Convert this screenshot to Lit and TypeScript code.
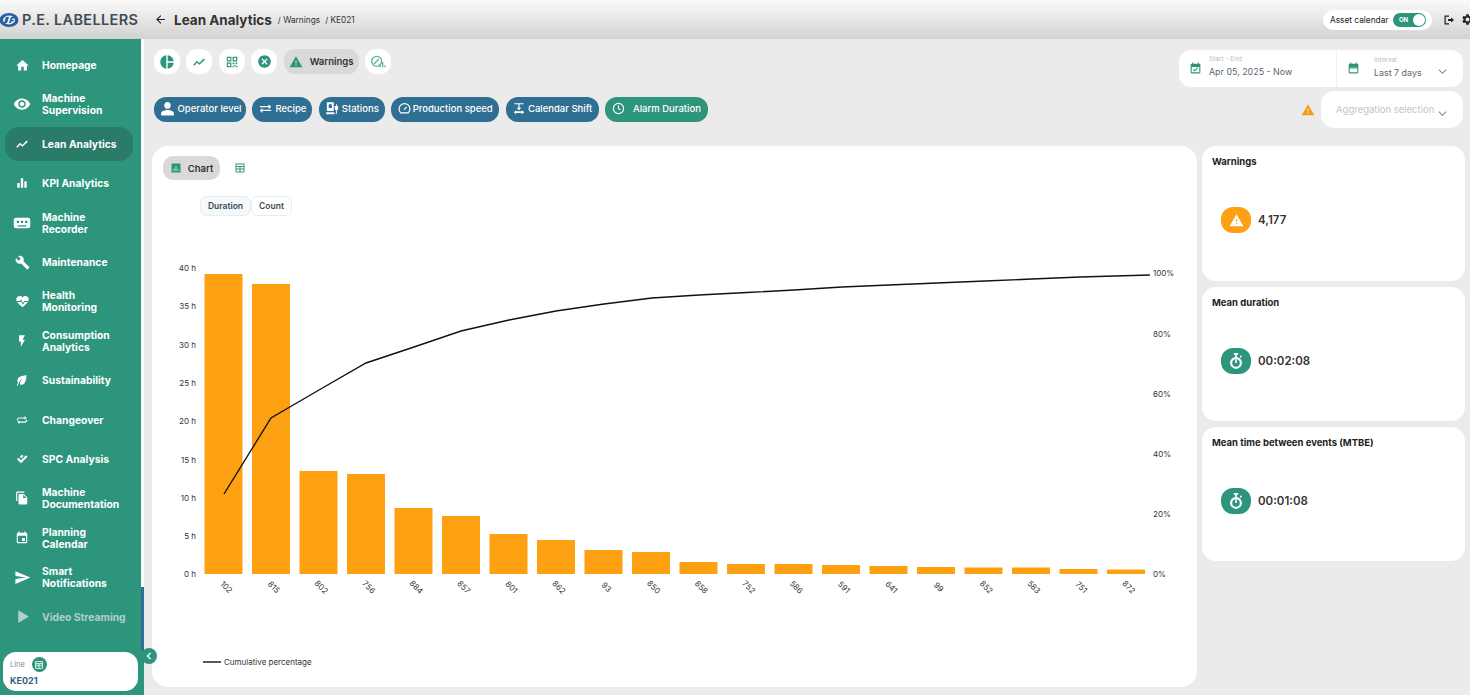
import { LitElement, html, css, svg } from "lit";
import { customElement } from "lit/decorators.js";

const PATHS: Record<string, string> = {
  home: "M10 20v-6h4v6h5v-8h3L12 3 2 12h3v8z",
  eye: "M12 4.5C7 4.5 2.73 7.61 1 12c1.73 4.39 6 7.5 11 7.5s9.27-3.11 11-7.5c-1.73-4.39-6-7.5-11-7.5zM12 17c-2.76 0-5-2.24-5-5s2.24-5 5-5 5 2.24 5 5-2.24 5-5 5zm0-8c-1.66 0-3 1.34-3 3s1.34 3 3 3 3-1.34 3-3-1.34-3-3-3z",
  trend: "M2 17l6.5-7 4 3.5L20 6l2 2-9.3 8.8-4-3.5L4 18.5z",
  bars: "M10 20h4V4h-4v16zm-6 0h4v-8H4v8zM16 9v11h4V9h-4z",
  recorder: "M4 5h16a3 3 0 0 1 3 3v8a3 3 0 0 1-3 3H4a3 3 0 0 1-3-3V8a3 3 0 0 1 3-3zm1 4v3h3V9H5zm5.5 0v3h3V9h-3zM16 9v3h3V9h-3zM6 15v1.5h12V15H6z",
  wrench: "M22.7 19l-9.1-9.1c.9-2.3.4-5-1.5-6.9-2-2-5-2.4-7.4-1.3L9 6 6 9 1.6 4.7C.4 7.1.9 10.1 2.9 12.1c1.9 1.9 4.6 2.4 6.9 1.5l9.1 9.1c.4.4 1 .4 1.4 0l2.3-2.3c.5-.4.5-1.1.1-1.4z",
  heart: "M12 21.35l-1.45-1.32C5.4 15.36 2 12.28 2 8.5 2 5.42 4.42 3 7.5 3c1.74 0 3.41.81 4.5 2.09C13.09 3.81 14.76 3 16.5 3 19.58 3 22 5.42 22 8.5c0 3.78-3.4 6.86-8.55 11.54L12 21.35zM3 11.2h5l1.8-3 3 6 1.9-3H21v1.6h-5.5l-2.8 4.2-3-6-.8 1.8H3z",
  bolt: "M7 2v11h3v9l7-12h-4l4-8z",
  leaf: "M6.05 8.05c-2.73 2.73-2.73 7.15-.02 9.88 1.47-3.4 4.09-6.24 7.36-7.93-2.77 2.34-4.71 5.61-5.39 9.32 2.6 1.23 5.8.78 7.95-1.37C19.43 14.47 20 4 20 4S9.53 4.57 6.05 8.05zM3 21.5c.6-2 1.5-3.6 2.6-5l1.2 1c-1 1.3-1.8 2.8-2.3 4.5z",
  repeat: "M7 9.5h9.5V12L20 8.5 16.5 5v2.5H7C4.8 7.5 3 9.3 3 11.5v1h2v-1c0-1.1.9-2 2-2zM17 14.5H7.5V12L4 15.5 7.5 19v-2.5H17c2.2 0 4-1.8 4-4v-1h-2v1c0 1.1-.9 2-2 2z",
  checks: "M2 12.5l3-3 5 5 10-10 3 3-13 13zM7.5 8l4-4.5 3.5 2.5-4.5 4.5z",
  docs: "M16 1H4c-1.1 0-2 .9-2 2v14h2V3h12V1zm-1 4l6 6v10c0 1.1-.9 2-2 2H7.99C6.89 23 6 22.1 6 21l.01-14c0-1.1.89-2 1.99-2h7zm-1 7h5.5L14 6.5V12z",
  event: "M17 12h-5v5h5v-5zM16 1v2H8V1H6v2H5c-1.11 0-1.99.9-1.99 2L3 19c0 1.1.89 2 2 2h14c1.1 0 2-.9 2-2V5c0-1.1-.9-2-2-2h-1V1h-2zm3 18H5V8h14v11z",
  send: "M2.01 21L23 12 2.01 3 2 10l15 2-15 2z",
  play: "M6 3v18l15-9z",
  warning: "M1 21h22L12 2 1 21zm12-3h-2v-2h2v2zm0-4h-2v-4h2v4z",
  pie: "M11 2v20c-5.07-.5-9-4.79-9-10s3.93-9.5 9-10zm2.03 0v8.99H22c-.47-4.74-4.24-8.52-8.97-8.99zm0 11.01V22c4.74-.47 8.5-4.25 8.97-8.99h-8.97z",
  qr: "M3 3h8v8H3V3zm2 2v4h4V5H5zm8-2h8v8h-8V3zm2 2v4h4V5h-4zM3 13h8v8H3v-8zm2 2v4h4v-4H5zm8-2h3v3h-3v-3zm5 0h3v3h-3v-3zm-3 4h3v2h-3v-2zm-2 2h2v2h-2v-2zm5 0h3v2h-3v-2z",
  cancel: "M12 2C6.47 2 2 6.47 2 12s4.47 10 10 10 10-4.47 10-10S17.53 2 12 2zm5 13.59L15.59 17 12 13.41 8.41 17 7 15.59 10.59 12 7 8.41 8.41 7 12 10.59 15.59 7 17 8.41 13.41 12 17 15.59z",
  person: "M12 12.5c2.6 0 4.6-2.1 4.6-4.8S14.6 2.8 12 2.8 7.4 5 7.4 7.7s2 4.8 4.6 4.8zm0 1.6c-3.4 0-9 1.6-9 4.5V22h18v-3.4c0-2.9-5.6-4.5-9-4.5z",
  swap: "M6.99 11L3 15l3.99 4v-3H21v-2H6.99v-3zM21 9l-3.99-4v3H3v2h14.01v3L21 9z",
  stations: "M3 2h11v14H3V2zm3 3v6h5V5H6zm-4 13h13v3H2v-3zM18 5h1v3h2v4c0 1.5-1 2.5-2 2.7V19c0 1.5-1 2-2 2v-1.5c.4 0 .5-.2.5-.5v-4.3c-1-.2-2-1.2-2-2.7V8h2V5z",
  shift: "M4 2h16v2h-7v6h3l-4 4-4-4h3V4H4V2zm3 12v2h10v-2l4 3.5-4 3.5v-2H7v2l-4-3.5L7 14z",
  gear: "M19.14 12.94c.04-.3.06-.61.06-.94 0-.32-.02-.64-.07-.94l2.03-1.58c.18-.14.23-.41.12-.61l-1.92-3.32c-.12-.22-.37-.29-.59-.22l-2.39.96c-.5-.38-1.03-.7-1.62-.94l-.36-2.54c-.04-.24-.24-.41-.48-.41h-3.84c-.24 0-.43.17-.47.41l-.36 2.54c-.59.24-1.13.57-1.62.94l-2.39-.96c-.22-.08-.47 0-.59.22L2.74 8.87c-.12.21-.08.47.12.61l2.03 1.58c-.05.3-.09.63-.09.94s.02.64.07.94l-2.03 1.58c-.18.14-.23.41-.12.61l1.92 3.32c.12.22.37.29.59.22l2.39-.96c.5.38 1.03.7 1.62.94l.36 2.54c.05.24.24.41.48.41h3.84c.24 0 .44-.17.47-.41l.36-2.54c.59-.24 1.13-.56 1.62-.94l2.39.96c.22.08.47 0 .59-.22l1.92-3.32c.12-.22.07-.47-.12-.61l-2.01-1.58zM12 15.6c-1.98 0-3.6-1.62-3.6-3.6s1.62-3.6 3.6-3.6 3.6 1.62 3.6 3.6-1.62 3.6-3.6 3.6z",
  back: "M20 11H7.83l5.59-5.59L12 4l-8 8 8 8 1.41-1.41L7.83 13H20z",
  logout: "M3 3h9v2.5H5.5v13H12V21H3V3zm13 4l6 5-6 5v-3.2h-6v-3.6h6V7z",
  chartbox: "M3 3h18v18H3V3zm4 10v5h2v-5H7zm4-5v10h2V8h-2zm4 7v3h2v-3h-2z",
  table: "M3 3h18v18H3V3zm2 2v3h14V5H5zm0 5v3h6v-3H5zm8 0v3h6v-3h-6zm-8 5v4h6v-4H5zm8 0v4h6v-4h-6z",
  calcheck: "M16 1v2H8V1H6v2H5a2 2 0 0 0-2 2v14a2 2 0 0 0 2 2h14a2 2 0 0 0 2-2V5a2 2 0 0 0-2-2h-1V1h-2zM5 9h14v10H5V9zm5.5 8.5L7.3 14.3l1.4-1.4 1.8 1.8 4.8-4.8 1.4 1.4-6.2 6.2z",
  calendar: "M16 1v2H8V1H6v2H5a2 2 0 0 0-2 2v14a2 2 0 0 0 2 2h14a2 2 0 0 0 2-2V5a2 2 0 0 0-2-2h-1V1h-2zM5 10h14v9H5v-9zm0 2h14v-1.5H5V12z",
};

const icon = (name: string, size: number, color = "currentColor") => html`
  <svg width=${size} height=${size} viewBox="0 0 24 24" fill=${color} style="flex:none">
    <path fill-rule="evenodd" d=${PATHS[name]}></path>
  </svg>
`;

const chevron = (size: number, color = "#7c8790") => html`
  <svg width=${size} height=${size} viewBox="0 0 12 12" fill="none" stroke=${color} stroke-width="1.1" style="flex:none">
    <polyline points="2,4 6,8 10,4"></polyline>
  </svg>
`;

const gauge = (size: number) => html`
  <svg width=${size} height=${size} viewBox="0 0 24 24" fill="none" stroke="#fff" stroke-width="2.2" style="flex:none">
    <path d="M5 20a10 10 0 1 1 14 0z"></path>
    <path d="M11 14l5-5"></path>
  </svg>
`;

const clock = (size: number) => html`
  <svg width=${size} height=${size} viewBox="0 0 24 24" fill="none" stroke="#fff" stroke-width="2" style="flex:none">
    <circle cx="12" cy="12" r="9.5"></circle>
    <path d="M12 6v6.5l4 2"></path>
  </svg>
`;

const stopwatch = (size: number) => html`
  <svg width=${size} height=${size} viewBox="0 0 24 24" fill="none" stroke="#fff" stroke-width="3" style="flex:none">
    <circle cx="12" cy="14.5" r="6.5"></circle>
    <path d="M9 2.5h6" stroke-width="2.4"></path>
    <path d="M12 3v4M12 14.5V10" stroke-width="2.2"></path>
    <path d="M17.5 7l1.8-1.8" stroke-width="2"></path>
  </svg>
`;

const NAV = [
  { icon: "home", size: 15, label: ["Homepage"] },
  { icon: "eye", size: 18, label: ["Machine", "Supervision"] },
  { icon: "trend", size: 14, label: ["Lean Analytics"], active: true },
  { icon: "bars", size: 14, label: ["KPI Analytics"] },
  { icon: "recorder", size: 18, label: ["Machine", "Recorder"] },
  { icon: "wrench", size: 15, label: ["Maintenance"] },
  { icon: "heart", size: 15, label: ["Health", "Monitoring"] },
  { icon: "bolt", size: 14, label: ["Consumption", "Analytics"] },
  { icon: "leaf", size: 14, label: ["Sustainability"] },
  { icon: "repeat", size: 14, label: ["Changeover"] },
  { icon: "checks", size: 12, label: ["SPC Analysis"] },
  { icon: "docs", size: 14, label: ["Machine", "Documentation"] },
  { icon: "event", size: 14, label: ["Planning", "Calendar"] },
  { icon: "send", size: 17, label: ["Smart", "Notifications"] },
  { icon: "play", size: 17, label: ["Video Streaming"], muted: true },
];

const FILTERS = [
  { label: "Operator level", w: 92, icon: icon("person", 17) },
  { label: "Recipe", w: 60, icon: icon("swap", 15) },
  { label: "Stations", w: 66, icon: icon("stations", 15) },
  { label: "Production speed", w: 108, icon: gauge(13) },
  { label: "Calendar Shift", w: 93, icon: icon("shift", 14) },
];

const BARS: [string, number][] = [
  ["102", 274], ["815", 284], ["802", 471], ["756", 474], ["884", 508],
  ["857", 516], ["801", 534], ["862", 540], ["93", 550], ["850", 552],
  ["858", 562], ["752", 564], ["586", 564], ["591", 565], ["641", 566],
  ["99", 567], ["852", 567.5], ["583", 567.5], ["751", 569], ["872", 569.5],
];

const LINE =
  "224,494 271,418 319,390 366,363 414,347 461,331 509,320 556,311 604,304 652,298 " +
  "699,295 747,292.5 794,290 842,287 889,285 937,283 985,281 1032,279 1080,277 1150,275";

const LEFT_TICKS: [string, number][] = [
  ["40 h", 268], ["35 h", 306], ["30 h", 344.5], ["25 h", 383], ["20 h", 421],
  ["15 h", 459.5], ["10 h", 497.5], ["5 h", 536], ["0 h", 574],
];
const RIGHT_TICKS: [string, number][] = [
  ["100%", 273], ["80%", 334], ["60%", 394], ["40%", 454], ["20%", 514], ["0%", 574],
];

const KPIS = [
  { title: "Warnings", value: "4,177", warn: true, h: 135 },
  { title: "Mean duration", value: "00:02:08", warn: false, h: 134 },
  { title: "Mean time between events (MTBE)", value: "00:01:08", warn: false, h: 134 },
];

@customElement("app-root")
export class AppRoot extends LitElement {
  static styles = css`
    :host {
      display: block;
      width: 100%;
      height: 100vh;
      overflow: hidden;
      background: #ebebeb;
      color: #333;
      font-family: Inter, "Liberation Sans", sans-serif;
    }
    .header {
      height: 39px;
      display: flex;
      align-items: center;
      background: linear-gradient(#fafafa, #d2d2d2);
      overflow: hidden;
    }
    .logo {
      width: 154px;
      flex: none;
      display: flex;
      align-items: center;
      gap: 3px;
    }
    .logo-text {
      font-size: 14.5px;
      font-weight: 600;
      color: #3f4b57;
      letter-spacing: 0.35px;
      white-space: nowrap;
    }
    .crumbs {
      display: flex;
      align-items: center;
      flex: 1;
      font-size: 8.3px;
      color: #333;
      white-space: nowrap;
    }
    .crumbs h1 {
      margin: 0 6px 0 7px;
      font-size: 13.5px;
      font-weight: 700;
      color: #333;
    }
    .crumbs span {
      margin-right: 5px;
    }
    .asset {
      width: 109px;
      height: 20px;
      flex: none;
      border-radius: 10px;
      background: #fff;
      display: flex;
      align-items: center;
      box-sizing: border-box;
      padding-left: 7px;
      font-size: 8.3px;
      color: #222;
      white-space: nowrap;
      justify-content: space-between;
      padding-right: 6px;
    }
    .toggle {
      width: 33px;
      height: 14px;
      border-radius: 7px;
      background: #2c957b;
      color: #fff;
      font-size: 6px;
      font-weight: 700;
      display: flex;
      align-items: center;
      justify-content: space-between;
      box-sizing: border-box;
      padding: 0 1px 0 6px;
    }
    .knob {
      width: 12px;
      height: 12px;
      border-radius: 50%;
      background: #fff;
    }
    .top-actions {
      flex: none;
      display: flex;
      align-items: center;
      gap: 6px;
      margin: 0 -4px 0 11px;
      color: #222;
    }
    .body {
      display: flex;
      height: 656px;
    }
    .sidebar {
      width: 144px;
      flex: none;
      position: relative;
      display: flex;
      background: #2c957b;
    }
    .nav {
      width: 141px;
      flex: none;
      box-sizing: border-box;
      padding-top: 6.4px;
      overflow: hidden;
    }
    .nav-item {
      height: 39.4px;
      display: flex;
      align-items: center;
      box-sizing: border-box;
      padding: 2.7px 8px 2.7px 5px;
      color: #fff;
    }
    .nav-inner {
      flex: 1;
      height: 100%;
      display: flex;
      align-items: center;
      border-radius: 14px;
      gap: 11px;
      padding-left: 8px;
      font-size: 10.3px;
      font-weight: 700;
      line-height: 12px;
    }
    .nav-icon {
      width: 18px;
      flex: none;
      display: flex;
      justify-content: center;
    }
    .nav-item.active .nav-inner {
      background: #2a7b67;
    }
    .nav-item.muted {
      color: #b4cfc7;
    }
    .scroll-track {
      width: 3px;
      height: 612px;
      background: #fbfbfb;
      display: flex;
      flex-direction: column;
      justify-content: flex-end;
    }
    .scroll-thumb {
      height: 64px;
      background: #2f6f94;
    }
    .line-card {
      position: absolute;
      left: 3px;
      bottom: 4px;
      width: 135px;
      height: 39px;
      box-sizing: border-box;
      padding: 5px 7px;
      border-radius: 13px;
      background: #fff;
    }
    .line-top {
      display: flex;
      align-items: center;
      gap: 7px;
      font-size: 7.5px;
      color: #7b8a96;
    }
    .line-badge {
      width: 15px;
      height: 15px;
      border-radius: 50%;
      background: #2c957b;
      display: flex;
      align-items: center;
      justify-content: center;
    }
    .line-name {
      margin-top: 3px;
      font-size: 9px;
      font-weight: 700;
      color: #2f5f86;
    }
    .collapse {
      position: absolute;
      left: 141px;
      bottom: 31px;
      width: 16px;
      height: 16px;
      border-radius: 50%;
      background: #2c957b;
      display: flex;
      align-items: center;
      justify-content: center;
    }
    .main {
      flex: 1;
      min-width: 0;
      box-sizing: border-box;
      padding: 10px 5px 8px 8px;
      display: flex;
      flex-direction: column;
    }
    .toolbar {
      height: 97px;
      flex: none;
      display: flex;
      justify-content: space-between;
    }
    .tool-rows {
      padding-left: 2px;
    }
    .views {
      display: flex;
      gap: 6.4px;
      height: 25px;
    }
    .view {
      width: 26px;
      height: 25px;
      border-radius: 11px;
      background: #fff;
      display: flex;
      align-items: center;
      justify-content: center;
    }
    .view.selected {
      width: 75px;
      background: #d9d9d9;
      gap: 7px;
      font-size: 9.5px;
      font-weight: 600;
      color: #333;
    }
    .filters {
      display: flex;
      gap: 6.4px;
      margin-top: 23px;
    }
    .filter {
      height: 25px;
      box-sizing: border-box;
      border-radius: 12px;
      padding-bottom: 2px;
      background: #2f6f94;
      color: #fff;
      font-size: 9.5px;
      font-weight: 500;
      display: flex;
      align-items: center;
      justify-content: center;
      gap: 2px;
      white-space: nowrap;
    }
    .filter.alarm {
      background: #2c957b;
      gap: 8px;
    }
    .selectors {
      width: 284px;
      margin-right: 2px;
      padding-top: 1px;
      display: flex;
      flex-direction: column;
      align-items: flex-end;
      gap: 4px;
    }
    .date-card {
      width: 100%;
      height: 37px;
      display: flex;
      background: #fff;
      border-radius: 12px;
    }
    .date-part {
      display: flex;
      align-items: center;
      box-sizing: border-box;
      gap: 7px;
      padding-left: 10px;
      font-size: 8.9px;
      color: #5c6670;
      white-space: nowrap;
    }
    .date-part small {
      display: block;
      font-size: 6.5px;
      line-height: 8px;
      color: #b5bcc3;
      margin-bottom: 3px;
    }
    .date-part.range {
      width: 158px;
      border-right: 1px solid #f1f1f1;
    }
    .date-part.range > div {
      margin-top: -5px;
    }
    .date-part.interval {
      flex: 1;
      gap: 14px;
    }
    .date-part.interval > div {
      margin-top: -3px;
    }
    .date-part.interval > svg:last-child {
      margin-left: 1px;
      margin-top: 6px;
    }
    .agg-row {
      display: flex;
      align-items: center;
      gap: 6px;
    }
    .agg {
      width: 142px;
      height: 37px;
      border-radius: 13px;
      background: #fff;
      box-sizing: border-box;
      padding: 0 15px;
      display: flex;
      align-items: center;
      font-size: 9.5px;
      color: #c0c6cc;
      white-space: nowrap;
      gap: 3px;
    }
    .agg svg {
      margin-top: 8px;
    }
    .content {
      flex: 1;
      min-height: 0;
      display: flex;
      gap: 5px;
    }
    .chart-card {
      width: 1045px;
      flex: none;
      background: #fff;
      border-radius: 16px;
      overflow: hidden;
      display: flex;
      flex-direction: column;
    }
    .tabs {
      display: flex;
      align-items: center;
      gap: 8px;
      margin: 10px 0 0 11px;
    }
    .tab {
      width: 57px;
      height: 24px;
      border-radius: 10px;
      background: #d9d9d9;
      display: flex;
      align-items: center;
      justify-content: center;
      gap: 6px;
      font-size: 9.5px;
      font-weight: 600;
      color: #333;
    }
    .tab-plain {
      width: 24px;
      display: flex;
      justify-content: center;
    }
    .modes {
      display: flex;
      margin: 16px 0 14px 48px;
      font-size: 8.5px;
      font-weight: 600;
      color: #3d4852;
    }
    .mode {
      height: 20px;
      box-sizing: border-box;
      border: 1px solid #e7ecf1;
      border-radius: 7px;
      padding-bottom: 1px;
      display: flex;
      align-items: center;
      justify-content: center;
    }
    .mode.on {
      width: 51px;
      background: #f4f9fc;
    }
    .mode.off {
      width: 41px;
      background: #fff;
    }
    .chart {
      display: block;
      font-family: Inter, "Liberation Sans", sans-serif;
      font-size: 8px;
      fill: #333;
    }
    .kpis {
      flex: 1;
      display: flex;
      flex-direction: column;
      gap: 6px;
    }
    .kpi {
      background: #fff;
      border-radius: 14px;
      box-sizing: border-box;
      padding: 10px;
      display: flex;
      flex-direction: column;
    }
    .kpi h3 {
      margin: 0;
      font-size: 9.5px;
      line-height: 11px;
      font-weight: 700;
      color: #222;
    }
    .kpi-body {
      display: flex;
      align-items: center;
      gap: 7px;
      margin: 40px 0 0 9px;
      font-size: 11.5px;
      font-weight: 600;
      color: #333;
    }
    .kpi-icon {
      width: 30px;
      height: 26px;
      border-radius: 12px;
      display: flex;
      align-items: center;
      justify-content: center;
    }
    .kpi-icon.orange {
      background: #fda011;
    }
    .kpi-icon.green {
      background: #2c957b;
    }
  `;

  private renderChart() {
    return html`
      <svg class="chart" width="1045" height="457" viewBox="152 230 1045 457">
        ${BARS.map(([name, top], i) => {
          const x = 204.5 + i * 47.5;
          return svg`
            <rect x=${x} y=${top} width="38" height=${574 - top} fill="#fda011"></rect>
            <text x=${x + 22} y="590" text-anchor="middle"
              transform="rotate(45 ${x + 22} 587)">${name}</text>
          `;
        })}
        ${LEFT_TICKS.map(([t, y]) => svg`<text x="196" y=${y + 3} text-anchor="end">${t}</text>`)}
        ${RIGHT_TICKS.map(([t, y]) => svg`<text x="1153" y=${y + 3}>${t}</text>`)}
        <polyline points=${LINE} fill="none" stroke="#111" stroke-width="1.4"></polyline>
        <line x1="203" y1="662" x2="221" y2="662" stroke="#222" stroke-width="1.4"></line>
        <text x="224" y="665">Cumulative percentage</text>
      </svg>
    `;
  }

  render() {
    return html`
      <div class="header">
        <div class="logo">
          <svg width="19" height="16" viewBox="0 0 19 16" style="flex:none">
            <ellipse cx="9" cy="8" rx="9.5" ry="7" fill="#2a5f9e"></ellipse>
            <ellipse cx="9" cy="8" rx="6" ry="4.4" fill="#e6eef7"></ellipse>
            <path d="M4 11l2-6h3l-2 6zM9 11l2-6h4l-.5 1.5h-2L12 8h2l-.5 1.2h-2l-.6 1.8z" fill="#2a5f9e"></path>
          </svg>
          <span class="logo-text">P.E. LABELLERS</span>
        </div>
        <div class="crumbs">
          ${icon("back", 13, "#222")}
          <h1>Lean Analytics</h1>
          <span>/ Warnings</span>
          <span>/ KE021</span>
        </div>
        <div class="asset">
          Asset calendar
          <div class="toggle">ON<div class="knob"></div></div>
        </div>
        <div class="top-actions">
          ${icon("logout", 12)}
          ${icon("gear", 13)}
        </div>
      </div>
      <div class="body">
        <aside class="sidebar">
          <nav class="nav">
            ${NAV.map(
              (n) => html`
                <div class="nav-item ${n.active ? "active" : ""} ${n.muted ? "muted" : ""}">
                  <div class="nav-inner">
                    <span class="nav-icon">${icon(n.icon, n.size)}</span>
                    <div>${n.label.map((l) => html`<div>${l}</div>`)}</div>
                  </div>
                </div>
              `,
            )}
          </nav>
          <div class="scroll-track"><div class="scroll-thumb"></div></div>
          <div class="line-card">
            <div class="line-top">
              Line
              <span class="line-badge">${icon("table", 10, "#fff")}</span>
            </div>
            <div class="line-name">KE021</div>
          </div>
          <div class="collapse">
            <svg width="8" height="8" viewBox="0 0 8 8" fill="none" stroke="#fff" stroke-width="1.3">
              <polyline points="5.5,1 2.5,4 5.5,7"></polyline>
            </svg>
          </div>
        </aside>
        <main class="main">
          <div class="toolbar">
            <div class="tool-rows">
              <div class="views">
                <div class="view">${icon("pie", 16, "#2c957b")}</div>
                <div class="view">${icon("trend", 14, "#2c957b")}</div>
                <div class="view">${icon("qr", 14, "#2c957b")}</div>
                <div class="view">${icon("cancel", 15, "#2c957b")}</div>
                <div class="view selected">${icon("warning", 14, "#2c957b")}Warnings</div>
                <div class="view">
                  <svg width="16" height="16" viewBox="0 0 24 24" fill="none" stroke="#5fae9a" stroke-width="2">
                    <circle cx="10" cy="11" r="7.5"></circle>
                    <path d="M6 15l7-7M15 20v-5M19 20v-8M22.5 20v-3"></path>
                  </svg>
                </div>
              </div>
              <div class="filters">
                ${FILTERS.map(
                  (f) => html`<div class="filter" style="width:${f.w}px">${f.icon}${f.label}</div>`,
                )}
                <div class="filter alarm" style="width:103px">${clock(13)}Alarm Duration</div>
              </div>
            </div>
            <div class="selectors">
              <div class="date-card">
                <div class="date-part range">
                  ${icon("calcheck", 13, "#2c957b")}
                  <div><small>Start - End</small>Apr 05, 2025 - Now</div>
                </div>
                <div class="date-part interval">
                  ${icon("calendar", 13, "#2c957b")}
                  <div><small>Interval</small>Last 7 days</div>
                  ${chevron(11)}
                </div>
              </div>
              <div class="agg-row">
                ${icon("warning", 14, "#f59c1f")}
                <div class="agg">Aggregation selection ${chevron(11)}</div>
              </div>
            </div>
          </div>
          <div class="content">
            <section class="chart-card">
              <div class="tabs">
                <div class="tab">${icon("chartbox", 12, "#2c957b")}Chart</div>
                <div class="tab-plain">${icon("table", 12, "#2c957b")}</div>
              </div>
              <div class="modes">
                <div class="mode on">Duration</div>
                <div class="mode off">Count</div>
              </div>
              ${this.renderChart()}
            </section>
            <section class="kpis">
              ${KPIS.map(
                (k) => html`
                  <div class="kpi" style="height:${k.h}px">
                    <h3>${k.title}</h3>
                    <div class="kpi-body">
                      <div class="kpi-icon ${k.warn ? "orange" : "green"}">
                        ${k.warn ? icon("warning", 15, "#fff") : stopwatch(18)}
                      </div>
                      ${k.value}
                    </div>
                  </div>
                `,
              )}
            </section>
          </div>
        </main>
      </div>
    `;
  }
}
